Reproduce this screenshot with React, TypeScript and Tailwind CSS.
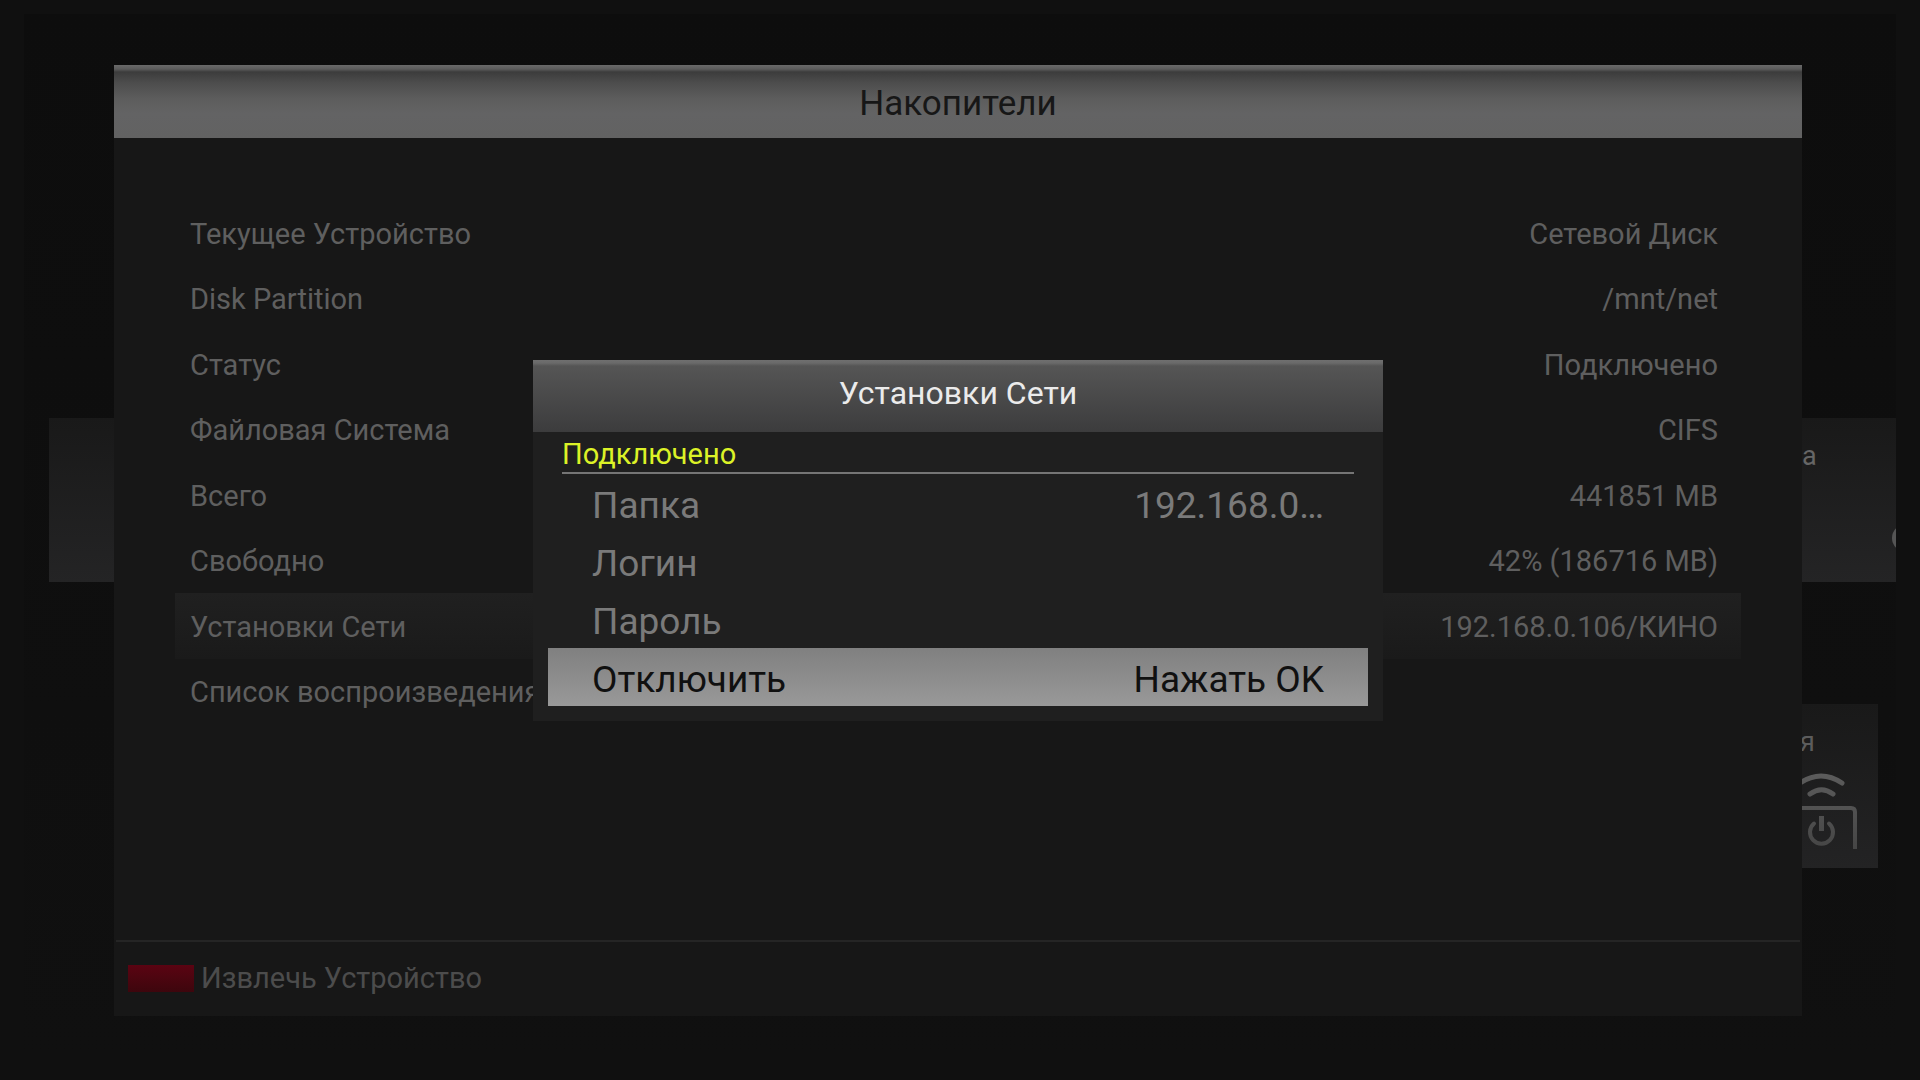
import React from 'react';

interface SettingRow {
  label: string;
  value: string;
  selected?: boolean;
}

const storageRows: SettingRow[] = [
  { label: 'Текущее Устройство', value: 'Сетевой Диск' },
  { label: 'Disk Partition', value: '/mnt/net' },
  { label: 'Статус', value: 'Подключено' },
  { label: 'Файловая Система', value: 'CIFS' },
  { label: 'Всего', value: '441851 MB' },
  { label: 'Свободно', value: '42% (186716 MB)' },
  { label: 'Установки Сети', value: '192.168.0.106/КИНО', selected: true },
  { label: 'Список воспроизведения', value: '' },
];

const networkRows: SettingRow[] = [
  { label: 'Папка', value: '192.168.0…' },
  { label: 'Логин', value: '' },
  { label: 'Пароль', value: '' },
  { label: 'Отключить', value: 'Нажать OK', selected: true },
];

function RemoteIcon() {
  return (
    <svg className="w-[60px] h-[80px]" viewBox="0 0 60 80" fill="none">
      <defs>
        <linearGradient id="remote" x1="0" y1="0" x2="0" y2="80" gradientUnits="userSpaceOnUse">
          <stop offset="0" stopColor="#5c5c5c" />
          <stop offset="1" stopColor="#454545" />
        </linearGradient>
      </defs>
      <g stroke="url(#remote)" strokeLinecap="round">
        <path d="M0 11 Q21 -3 42 11" strokeWidth="5" />
        <path d="M10 22 Q21.500 13.500 33 22" strokeWidth="5" />
        <path d="M0 36 H51 Q55 36 55 40 V77" strokeWidth="4" strokeLinecap="butt" />
        <path d="M14 51.500 A11.500 11.500 0 1 0 29 51.500" strokeWidth="4" />
        <path d="M21.500 44 V59" strokeWidth="5" strokeLinecap="butt" />
      </g>
    </svg>
  );
}

// Launcher that stays visible around the edges of the panel
function Launcher() {
  return (
    <div className="h-full px-6 pt-[14px] pb-[18px]">
      <div className="h-full bg-linear-to-b from-[#0d0d0d] to-[#101010] pt-[404px]">
        <div className="flex justify-between pl-[25px]">
          <div className="w-[260px] h-[164px] bg-linear-to-b from-[#191919] to-[#242425]" />
          <div className="flex w-[260px] h-[164px] overflow-hidden bg-linear-to-b from-[#191919] to-[#242425] pl-[166px] pt-[22px] text-[27px] leading-[32px] text-[#666666]">
            <span>а</span>
            <svg className="ml-auto mt-[80px] w-1 h-[40px]" viewBox="0 0 4 40">
              <circle cx="14" cy="18" r="14" fill="#555555" />
            </svg>
          </div>
        </div>
        <div className="flex justify-end pt-[122px] pr-[18px]">
          <div className="w-[242px] h-[164px] overflow-hidden bg-linear-to-b from-[#191919] to-[#232324] pl-[164px] pt-[22px] text-[27px] leading-[32px] text-[#5c5c5c]">
            <div>я</div>
            <div className="pt-[14px]">
              <RemoteIcon />
            </div>
          </div>
        </div>
      </div>
    </div>
  );
}

function NetworkDialog() {
  return (
    <div role="dialog" aria-labelledby="network-title" className="w-[850px] bg-[#1f1f1f] pb-[15px]">
      <h2
        id="network-title"
        className="h-[72px] pt-[13px] text-center text-[32px] leading-[40px] text-[#ebebeb] bg-[linear-gradient(to_bottom,#6f6f6f_0px,#6a6a6a_3px,#555555_6px,#3c3c3d_72px)]"
      >
        Установки Сети
      </h2>
      <div className="mx-[29px] h-[42px] border-b-2 border-[#757575] pt-[4px] text-[29px] leading-[36px] text-[#dcf227]">
        Подключено
      </div>
      <div className="px-[15px]">
        {networkRows.map(row => (
          <button
            key={row.label}
            className={`flex w-full h-[58px] items-center justify-between px-[44px] pt-[5px] text-[37px] leading-[44px] ${
              row.selected
                ? 'bg-linear-to-b from-[#808080] to-[#999999] text-[#101010]'
                : 'text-[#7a7a7a]'
            }`}
          >
            <span>{row.label}</span>
            <span>{row.value}</span>
          </button>
        ))}
      </div>
    </div>
  );
}

function StoragePanel() {
  return (
    <div className="relative flex flex-col h-full bg-[#171717]">
      <h1 className="h-[73px] pt-[18px] text-center text-[35px] leading-[42px] text-[#171717] bg-[linear-gradient(to_bottom,#6a6a6a_0px,#5c5c5c_4px,#3c3c3c_7px,#4d4d4d_18px,#5d5d5d_34px,#636364_48px,#626262_73px)]">
        Накопители
      </h1>
      <div className="grid grid-rows-8 h-[524px] mt-[62px] mx-[61px]">
        {storageRows.map(row => (
          <button
            key={row.label}
            className={`flex items-center justify-between pt-[2px] pl-[15px] pr-[23px] text-[29px] leading-[36px] text-[#5f5f5f] ${
              row.selected ? 'bg-linear-to-b from-[#202020] to-[#1a1a1a]' : ''
            }`}
          >
            <span>{row.label}</span>
            <span>{row.value}</span>
          </button>
        ))}
      </div>
      <div className="flex h-[76px] mt-auto mx-[2px] pt-[18px] pl-[12px] border-t-2 border-[#252525]">
        <button className="flex h-[36px] items-center gap-[7px] text-[29px] leading-[36px] text-[#4c4c4c]">
          <span className="w-[66px] h-[27px] bg-linear-to-b from-[#5b0312] to-[#3d060d]" />
          Извлечь Устройство
        </button>
      </div>
      <div className="absolute inset-0 flex items-center justify-center">
        <NetworkDialog />
      </div>
    </div>
  );
}

export default function App() {
  return (
    <div className="relative h-screen overflow-hidden bg-[#101010] font-['Roboto',sans-serif]">
      <Launcher />
      <div className="absolute inset-0 pl-[114px] pr-[118px] pt-[65px] pb-[64px]">
        <StoragePanel />
      </div>
    </div>
  );
}
